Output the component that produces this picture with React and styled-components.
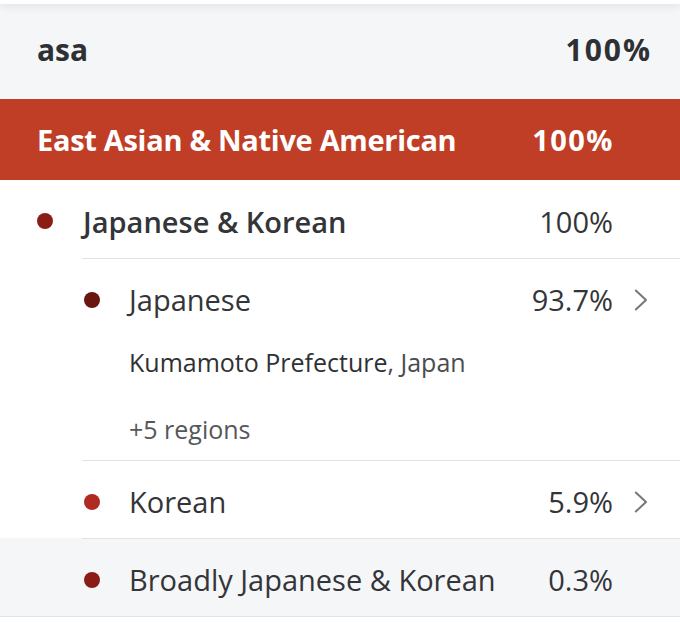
import React from 'react';
import styled, { createGlobalStyle } from 'styled-components';

const GlobalStyle = createGlobalStyle`
	html, body {
		margin: 0;
		padding: 0;
		background: #ffffff;
	}
	body {
		font-family: 'Open Sans', Lato, sans-serif;
		color: #333538;
		-webkit-font-smoothing: antialiased;
	}
`;

const children = [
	{
		name: 'Japanese',
		value: '93.7%',
		dot: '#6b1511',
		more: true,
		region: 'Kumamoto Prefecture',
		country: 'Japan',
		extra: '+5 regions',
	},
	{ name: 'Korean', value: '5.9%', dot: '#b02a22', more: true },
	{
		name: 'Broadly Japanese & Korean',
		value: '0.3%',
		dot: '#8c1d15',
		shaded: true,
	},
];

const Chevron = () => (
	<svg width="14" height="22" viewBox="0 0 14 22" fill="none">
		<path
			d="M1.8 1.5 L12 11 L1.8 20.5"
			stroke="#75777b"
			strokeWidth="2"
			strokeLinecap="round"
			strokeLinejoin="round"
		/>
	</svg>
);

const App = () => {
	return (
		<React.Fragment>
			<GlobalStyle />
			<Page>
				<TopEdge />
				<Header>
					<HeaderName>asa</HeaderName>
					<HeaderValue>100%</HeaderValue>
				</Header>

				<GroupBar>
					<GroupName>East Asian &amp; Native American</GroupName>
					<GroupValue>100%</GroupValue>
				</GroupBar>

				<ParentRow>
					<Dot color="#8a1e16" />
					<ParentName>Japanese &amp; Korean</ParentName>
					<Value>100%</Value>
					<ChevronSlot />
				</ParentRow>

				{children.map(child => (
					<ChildOuter key={child.name} shaded={child.shaded}>
						<ChildInner>
							<ChildLine>
								<Dot color={child.dot} />
								<ChildName>{child.name}</ChildName>
								<Value>{child.value}</Value>
								<ChevronSlot>{child.more && <Chevron />}</ChevronSlot>
							</ChildLine>

							{child.region && (
								<Region>
									<RegionStrong>{child.region}</RegionStrong>, {child.country}
								</Region>
							)}
							{child.extra && <Extra>{child.extra}</Extra>}
						</ChildInner>
					</ChildOuter>
				))}
			</Page>
		</React.Fragment>
	);
};

export default App;

const Page = styled.div`
	width: 680px;
	height: 622px;
	overflow: hidden;
	background: #ffffff;
`;

const TopEdge = styled.div`
	position: relative;
	z-index: 1;
	height: 4px;
	background: #ffffff;
	box-shadow: 0 2px 9px rgba(0, 0, 0, 0.13);
`;

const Header = styled.div`
	display: flex;
	align-items: center;
	justify-content: space-between;
	height: 95px;
	padding: 0 30px 0 37px;
	background: #f5f6f8;
`;

const HeaderName = styled.div`
	font-size: 30px;
	line-height: 38px;
	font-weight: 700;
	color: #2e3033;
	padding-bottom: 4px;
`;

const HeaderValue = styled(HeaderName)`
	letter-spacing: 2px;
	margin-right: -2px;
`;

const GroupBar = styled.div`
	display: flex;
	align-items: center;
	height: 81px;
	padding: 0 0 0 37px;
	background: #c03e26;
	color: #ffffff;
`;

const GroupName = styled.div`
	flex: 1;
	white-space: nowrap;
	font-size: 29px;
	line-height: 36px;
	font-weight: 700;
	letter-spacing: -0.3px;
`;

const GroupValue = styled(GroupName)`
	flex: none;
	padding-right: 66px;
	letter-spacing: 1.5px;
`;

const ParentRow = styled.div`
	display: flex;
	align-items: center;
	box-sizing: border-box;
	height: 78px;
	padding: 5px 0 0 37px;
`;

const Dot = styled.span`
	flex: none;
	width: 16px;
	height: 16px;
	border-radius: 50%;
	background: ${props => props.color};
	margin-right: 30px;
	margin-top: -1px;
`;

const ParentName = styled.div`
	flex: 1;
	font-size: 29px;
	line-height: 36px;
	font-weight: 600;
	color: #333538;
`;

const Value = styled.div`
	flex: none;
	font-size: 29px;
	line-height: 36px;
	color: #333538;
	text-align: right;
`;

const ChevronSlot = styled.div`
	flex: none;
	width: 67px;
	display: flex;
	align-items: center;
	justify-content: flex-start;
	padding-left: 21px;
	box-sizing: border-box;
`;

const ChildOuter = styled.div`
	padding-left: 82px;
	background: ${props => (props.shaded ? '#f5f6f8' : 'transparent')};
	border-bottom: ${props => (props.shaded ? '1px solid #e2e3e5' : 'none')};
`;

const ChildInner = styled.div`
	border-top: 1px solid #e2e3e5;
`;

const ChildLine = styled.div`
	display: flex;
	align-items: center;
	box-sizing: border-box;
	height: 77px;
	padding: 5px 0 0 2px;
	& > span {
		margin-right: 29px;
	}
`;

const ChildName = styled.div`
	flex: 1;
	font-size: 29px;
	line-height: 36px;
	color: #333538;
`;

const Region = styled.div`
	padding-left: 47px;
	margin-top: 10px;
	font-size: 25px;
	line-height: 32px;
	color: #4a4c50;
`;

const RegionStrong = styled.span`
	color: #2f3134;
`;

const Extra = styled.div`
	padding: 35px 0 15px 47px;
	font-size: 25px;
	line-height: 32px;
	color: #55575b;
`;
